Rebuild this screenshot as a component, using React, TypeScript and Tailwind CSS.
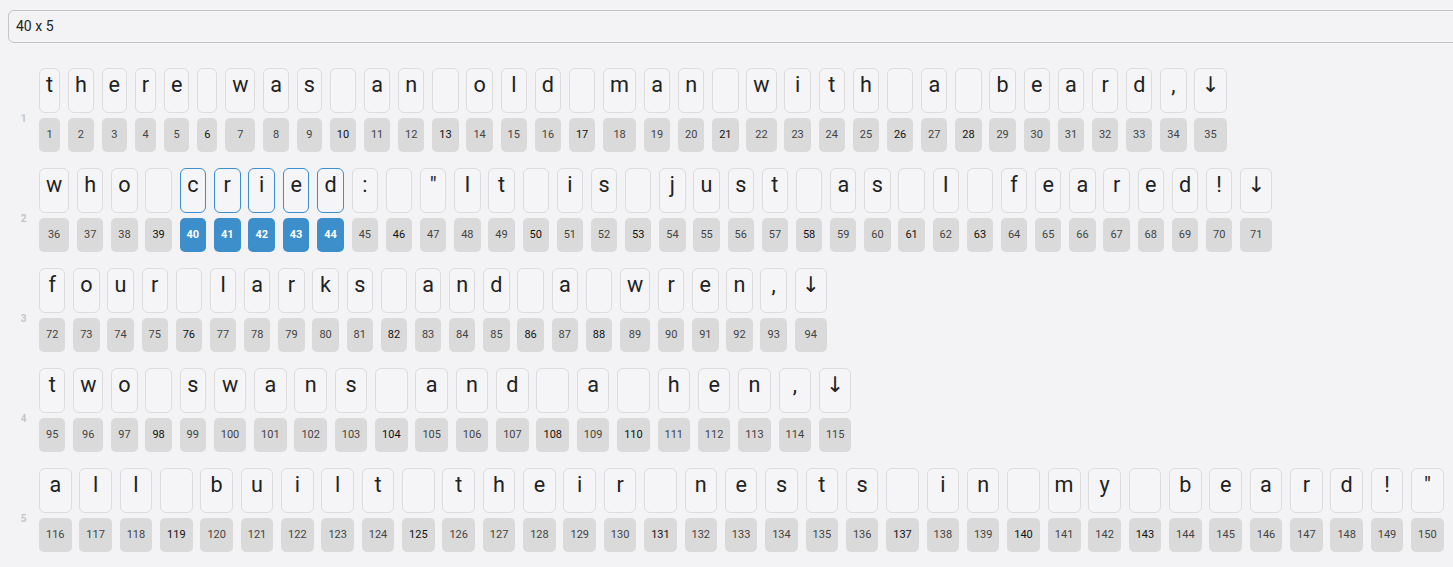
import React from 'react';

const lines = [
  'there was an old man with a beard,\u2193',
  'who cried: "It is just as I feared!\u2193',
  'four larks and a wren,\u2193',
  'two swans and a hen,\u2193',
  'all built their nests in my beard!"',
];

const selected = [40, 41, 42, 43, 44];

function Cell({ ch, n }: { ch: string; n: number }) {
  const active = selected.includes(n);
  const isSpace = ch === ' ';
  return (
    <div className="flex flex-col gap-[5px] shrink-0">
      <div
        className={`h-[45px] px-[6px] pt-[3px] rounded-[6px] border text-center text-[21.6px] leading-[26px] text-[#222] bg-[#f5f5f7] whitespace-pre ${
          active ? 'border-[#3b8fd0]' : 'border-[#dcdcdc]'
        }`}
      >
        {ch}
      </div>
      <div
        className={`h-[34px] px-[7px] rounded-[5px] flex items-center justify-center text-[11px] ${
          active
            ? 'bg-[#3d8fcc] text-white font-bold'
            : isSpace
            ? 'bg-[#dadada] text-[#111]'
            : 'bg-[#dadada] text-[#444]'
        }`}
      >
        {n}
      </div>
    </div>
  );
}

export default function App() {
  let counter = 0;
  return (
    <div
      className="min-h-screen bg-[#f3f3f5] overflow-x-hidden pt-[10px]"
      style={{ fontFamily: 'Roboto, "DejaVu Sans", "Liberation Sans", sans-serif' }}
    >
      <div className="ml-2 w-full h-[33px] border border-[#c4c4c4] rounded-md px-[7px] flex items-center text-[14px] text-[#222]">
        40 x 5
      </div>

      {/* Lines */}
      <div className="mt-[25px] px-2">
        {lines.map((line, i) => (
          <div key={i} className="flex items-center">
            <div className="w-[31px] shrink-0 text-center text-[10px] font-bold text-[#c5c5c5]">{i + 1}</div>
            <div className="flex gap-[7.8px] pb-4 shrink-0">
              {Array.from(line).map((ch) => {
                counter += 1;
                return <Cell key={counter} ch={ch} n={counter} />;
              })}
            </div>
          </div>
        ))}
      </div>
    </div>
  );
}
